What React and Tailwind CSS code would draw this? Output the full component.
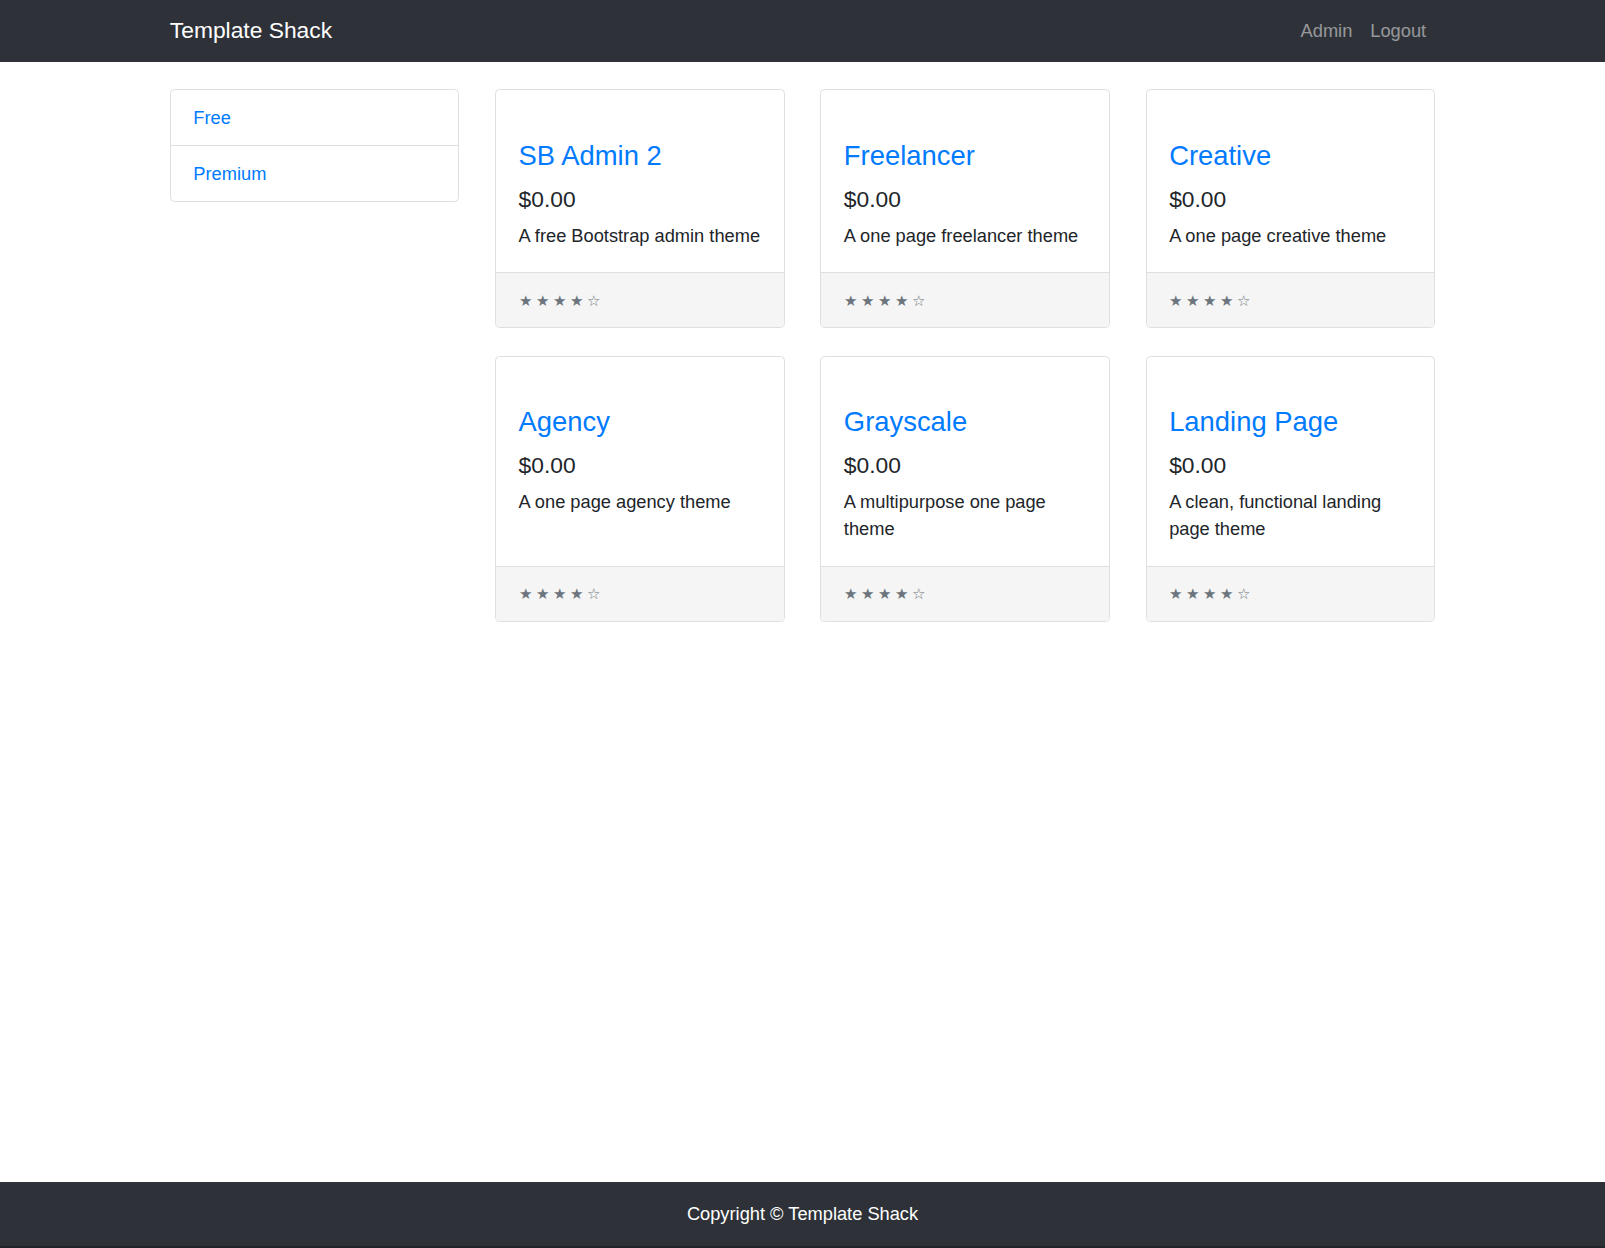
import React from "react";

const items = [
  { title: "SB Admin 2", desc: "A free Bootstrap admin theme" },
  { title: "Freelancer", desc: "A one page freelancer theme" },
  { title: "Creative", desc: "A one page creative theme" },
  { title: "Agency", desc: "A one page agency theme" },
  { title: "Grayscale", desc: "A multipurpose one page theme" },
  { title: "Landing Page", desc: "A clean, functional landing page theme" },
];

function Card({ title, desc }) {
  return (
    <div className="flex flex-col border border-[#dfdfdf] rounded-[4.5px] bg-white overflow-hidden">
      <div className="flex-1 px-[22.5px] pt-[49.5px] pb-[23.6px]">
        <h4 className="text-[27.4px] leading-[32.4px] mb-[13.5px] text-[#007bff] font-normal">
          <a href="#">{title}</a>
        </h4>
        <h5 className="text-[22.8px] leading-[27px] mb-[9px] font-normal">$0.00</h5>
        <p className="text-[18.25px] leading-[27px]">{desc}</p>
      </div>
      <div className="h-[55px] border-t border-[#dfdfdf] bg-[#f5f5f5] px-[22.5px] pt-[2px] flex items-center">
        <small className="text-[14.6px] leading-[27px] text-[#6c757d]">&#9733; &#9733; &#9733; &#9733; &#9734;</small>
      </div>
    </div>
  );
}

export default function App() {
  return (
    <div className="min-h-[1248px] flex flex-col bg-white text-[#212529] text-[18.25px] leading-[27px] font-['Liberation_Sans',Arial,sans-serif]">
      <nav className="bg-[#2e3238] h-[61.5px]">
        <div className="w-[1265.3px] mx-auto h-full flex items-center justify-between pb-[0.5px]">
          <a href="#" className="text-white text-[22.8px] leading-[33.75px]">Template Shack</a>
          <div className="flex">
            <a href="#" className="px-[9px] text-[rgba(255,255,255,0.5)]">Admin</a>
            <a href="#" className="px-[9px] text-[rgba(255,255,255,0.5)]">Logout</a>
          </div>
        </div>
      </nav>

      <main className="flex-1">
        <div className="w-[1265.3px] mx-auto pt-[27.8px] grid grid-cols-[289.5px_1fr] gap-x-[35.75px] items-start">
          <div className="border border-[#dfdfdf] rounded-[4.5px] flex flex-col">
            <a href="#" className="px-[22.5px] py-[14px] text-[#007bff] border-b border-[#dfdfdf]">Free</a>
            <a href="#" className="px-[22.5px] py-[14px] text-[#007bff]">Premium</a>
          </div>
          <div className="grid grid-cols-3 gap-x-[35.75px] gap-y-[27.5px]">
            {items.map((it) => (
              <Card key={it.title} title={it.title} desc={it.desc} />
            ))}
          </div>
        </div>
      </main>

      <footer className="bg-[#2e3238] pt-[18px] pb-[19.5px] border-b-2 border-[#212529] text-center text-white">
        Copyright &copy; Template Shack
      </footer>
    </div>
  );
}
